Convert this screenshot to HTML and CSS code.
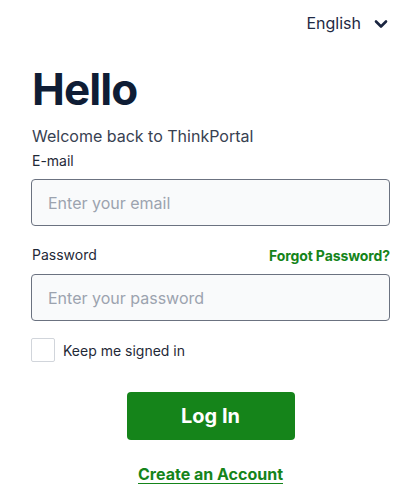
FILE: index.html
```html
<!DOCTYPE html>
<html lang="en">
<head>
<meta charset="utf-8">
<title>ThinkPortal Login</title>
<link rel="stylesheet" href="styles.css">
</head>
<body>
<div class="page">
  <header class="topbar">
    <button class="lang" type="button">
      <span>English</span>
      <svg class="chev" width="14" height="10" viewBox="0 0 14 10" aria-hidden="true"><path d="M2 2.5 L7 7.5 L12 2.5" fill="none" stroke="#1a2540" stroke-width="2.6" stroke-linecap="round" stroke-linejoin="round"/></svg>
    </button>
  </header>
  <main class="form">
    <h1 class="title">Hello</h1>
    <p class="subtitle">Welcome back to ThinkPortal</p>
    <label class="label" for="email">E-mail</label>
    <input class="input" id="email" type="email" placeholder="Enter your email">
    <div class="label-row">
      <label class="label" for="pw">Password</label>
      <a class="forgot" href="#">Forgot Password?</a>
    </div>
    <input class="input" id="pw" type="password" placeholder="Enter your password">
    <label class="remember">
      <span class="box"></span>
      <span>Keep me signed in</span>
    </label>
    <div class="actions">
      <button class="login" type="button">Log In</button>
      <a class="create" href="#">Create an Account</a>
    </div>
  </main>
</div>
</body>
</html>
```
FILE: styles.css
```css
* { box-sizing: border-box; }
html, body { margin: 0; padding: 0; background: #fff; }
body { font-family: Inter, "Noto Sans", sans-serif; color: #1f2937; }
.page { width: 420px; padding: 0 30px 0 31px; }
.topbar { display: flex; justify-content: flex-end; padding-top: 13px; }
.lang {
  display: flex; align-items: center; gap: 13px;
  background: none; border: 0; padding: 0; margin-right: 2px;
  font-family: inherit; font-size: 16px; color: #1f2a44; line-height: 20px;
}
.chev { display: block; margin-top: 1px; }
.form { display: flex; flex-direction: column; padding-top: 29px; }
.title { margin: 0; font-size: 44px; font-weight: 700; color: #0f1d35; line-height: 54px; letter-spacing: -0.9px; padding-left: 1px; }
.subtitle { margin: 10px 0 0 1px; font-size: 16px; line-height: 20px; color: #374151; }
.label { font-size: 14px; color: #1f2937; line-height: 18px; }
.form > .label { margin: 6px 0 9px 1px; }
.input {
  width: 100%; height: 47px; border: 1px solid #6b7280; border-radius: 4px;
  background: #f9fafb; padding: 0 16px; font-family: inherit; font-size: 16px; color: #111827;
}
.input::placeholder { color: #9ca3af; }
.label-row { display: flex; justify-content: space-between; align-items: center; margin: 20px 0 10px 1px; }
.forgot { font-size: 14px; font-weight: 700; color: #15841a; text-decoration: none; letter-spacing: -0.1px; }
.remember { display: flex; align-items: center; gap: 8px; margin-top: 17px; font-size: 14px; color: #1f2937; }
.box { width: 24px; height: 24px; border: 1px solid #d1d5db; border-radius: 2px; background: #fff; }
.actions { display: flex; flex-direction: column; align-items: center; margin-top: 30px; }
.login {
  width: 168px; height: 48px; background: #15841a; color: #fff; border: 0; border-radius: 4px;
  font-family: inherit; font-size: 20px; font-weight: 700;
}
.create { margin-top: 24px; font-size: 16px; font-weight: 700; color: #15841a; text-decoration: underline; text-underline-offset: 3px; }
```
